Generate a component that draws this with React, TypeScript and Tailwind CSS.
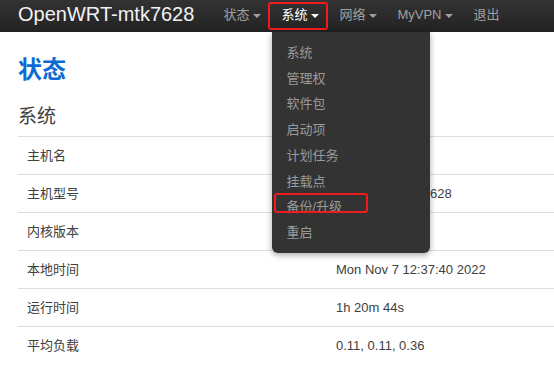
import React from 'react';

const navItems = [
  { label: '状态', caret: true },
  { label: '系统', caret: true, active: true },
  { label: '网络', caret: true },
  { label: 'MyVPN', caret: true },
  { label: '退出', caret: false },
];

const systemMenu = ['系统', '管理权', '软件包', '启动项', '计划任务', '挂载点', '备份/升级', '重启'];

const rows: [string, string][] = [
  ['主机名', ''],
  ['主机型号', 'MediaTek MTK7628'],
  ['内核版本', '4.14.221'],
  ['本地时间', 'Mon Nov 7 12:37:40 2022'],
  ['运行时间', '1h 20m 44s'],
  ['平均负载', '0.11, 0.11, 0.36'],
];

function Caret() {
  return <span className="ml-[4px] inline-block w-0 h-0 border-x-[4px] border-x-transparent border-t-[4px] border-t-current mt-[2px]" />;
}

export default function App() {
  return (
    <div className="relative w-[554px] h-[387px] bg-white overflow-hidden font-['Liberation_Sans','Noto_Sans_CJK_SC',sans-serif] text-[#404040]">
      {/* Top bar */}
      <nav className="h-[32px] flex items-center bg-linear-to-b from-[#333333] to-[#222222] relative z-10">
        <span className="pl-[18px] pb-[4px] text-[20px] leading-none text-[#f2f2f2]">OpenWRT-mtk7628</span>
        <ul className="flex ml-[19px] h-full">
          {navItems.map(item => (
            <li key={item.label} className="relative h-full flex items-center pb-[3px] px-[10px] text-[13px]">
              <span className={item.active ? 'text-white' : 'text-[#a0a0a0]'}>{item.label}</span>
              {item.caret && (
                <span className={item.active ? 'text-white flex' : 'text-[#a0a0a0] flex'}>
                  <Caret />
                </span>
              )}
              {item.active && (
                <>
                  <div className="absolute left-[-3px] top-[2px] w-[60px] h-[28px] border-2 border-[#ee1c1c] rounded-[3px]" />
                  <div className="absolute left-[1px] top-[32px] w-[158px] bg-[#333333] rounded-b-[6px] shadow-[0_2px_6px_rgba(0,0,0,0.35)] pt-[8px] pb-[7px]">
                    {systemMenu.map(m => (
                      <div key={m} className="h-[25.7px] flex items-center pl-[14px] text-[13px] text-[#9a9a9a]">
                        {m}
                      </div>
                    ))}
                    <div className="absolute left-[2px] top-[161px] w-[94px] h-[20px] border-2 border-[#ee1c1c] rounded-[3px]" />
                  </div>
                </>
              )}
            </li>
          ))}
        </ul>
      </nav>

      {/* Content */}
      <div className="pl-[18px]">
        <h1 className="mt-[20px] text-[24px] leading-[36px] font-bold text-[#0b6bd4]">状态</h1>
        <h3 className="mt-[15px] text-[19px] leading-[28px] text-[#404040]">系统</h3>
        <div className="mt-[5px]">
          {rows.map(([k, v]) => (
            <div key={k} className="flex h-[38px] items-center border-t border-[#dddddd] text-[13px]">
              <div className="w-[309px] pl-[9px]">{k}</div>
              <div className="pl-[9px]">{v}</div>
            </div>
          ))}
        </div>
      </div>
    </div>
  );
}
